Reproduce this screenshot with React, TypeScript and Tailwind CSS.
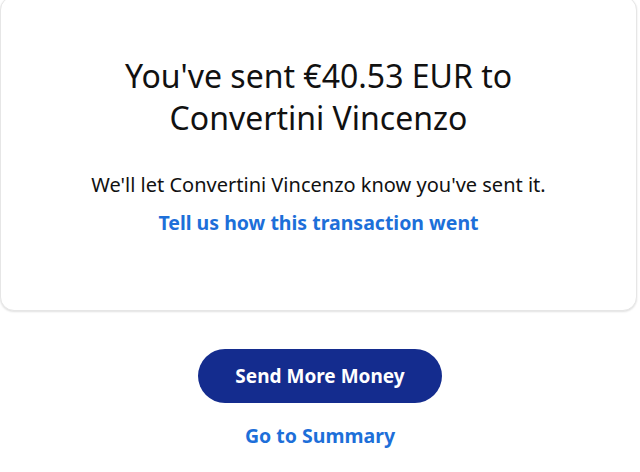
export default function App() {
  return (
    <div className="min-h-[472px] bg-white" style={{ fontFamily: '"Noto Sans", "Open Sans", sans-serif' }}>
      <div className="-mt-[4px] mr-[3px] rounded-[14px] border border-[#e6e6e6] bg-white pb-[73px] pt-[58px] text-center shadow-[0_1px_2px_rgba(0,0,0,0.12)]">
        <h1 className="mx-auto max-w-[440px] text-[32px] font-normal leading-[42px] text-[#111]">
          You've sent €40.53 EUR to Convertini Vincenzo
        </h1>
        <p className="mt-[32px] text-[20px] leading-[28px] text-[#111]">
          We'll let Convertini Vincenzo know you've sent it.
        </p>
        <a href="#" className="mt-[10px] inline-block text-[19.5px] font-bold leading-[28px] text-[#1d6fd9]">
          Tell us how this transaction went
        </a>
      </div>
      <div className="flex flex-col items-center pt-[38px]">
        <button className="h-[54px] w-[244px] rounded-full bg-[#142c8e] text-[19px] font-bold text-white">
          Send More Money
        </button>
        <a href="#" className="mt-[19px] text-[19.5px] font-bold leading-[28px] text-[#1d6fd9]">
          Go to Summary
        </a>
      </div>
    </div>
  );
}
